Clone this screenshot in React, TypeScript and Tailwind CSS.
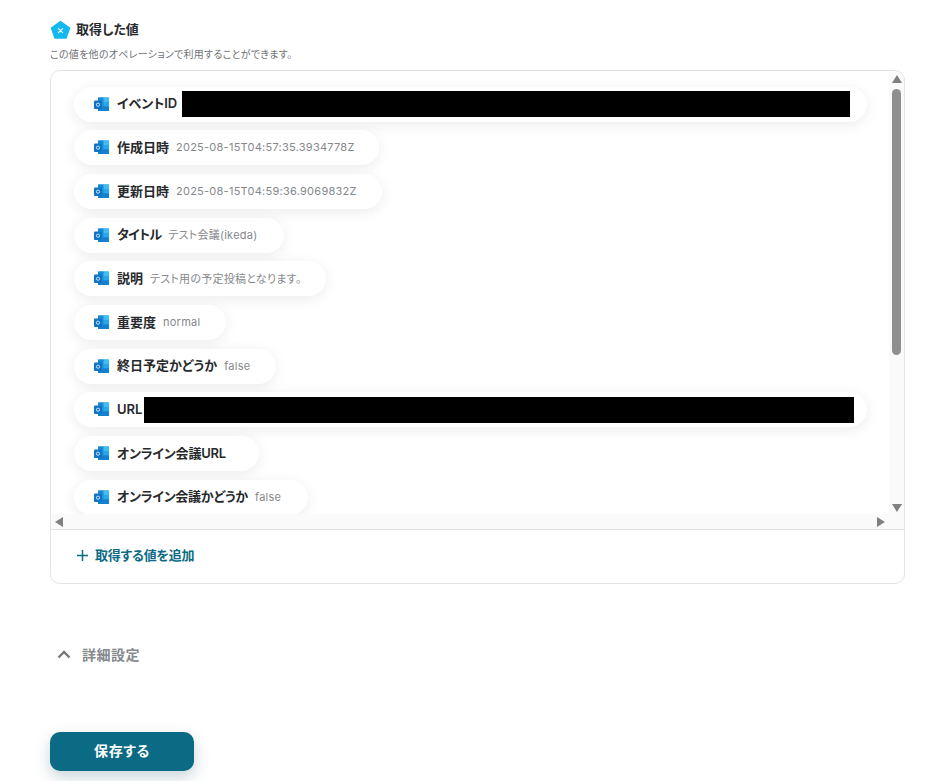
const font = "font-['Inter','Noto_Sans_CJK_JP',sans-serif] [font-feature-settings:'palt']";

type Row = { label: string; value?: string; redact?: number; gap?: string; track?: string; width: number };

const rows: Row[] = [
  { label: 'イベントID', redact: 668, gap: 'ml-[5px]', width: 793 },
  { label: '作成日時', value: '2025-08-15T04:57:35.3934778Z', width: 305 },
  { label: '更新日時', value: '2025-08-15T04:59:36.9069832Z', width: 308 },
  { label: 'タイトル', value: 'テスト会議(ikeda)', track: 'tracking-[-0.7px]', width: 210 },
  { label: '説明', value: 'テスト用の予定投稿となります。', width: 252 },
  { label: '重要度', value: 'normal', width: 152 },
  { label: '終日予定かどうか', value: 'false', width: 202 },
  { label: 'URL', redact: 710, gap: 'ml-[2px]', width: 793 },
  { label: 'オンライン会議URL', track: 'tracking-[-0.2px]', width: 185 },
  { label: 'オンライン会議かどうか', value: 'false', track: 'tracking-[-0.25px]', width: 234 },
];

function OutlookIcon() {
  return (
    <svg width="15" height="15" viewBox="0 0 15 15" className="shrink-0">
      <rect x="4" y="0.5" width="11" height="13.5" rx="1" fill="#1490df" />
      <rect x="4" y="0.5" width="5.5" height="4.5" fill="#1a8ad8" />
      <rect x="9.5" y="0.5" width="5.5" height="4.5" fill="#3fbcf0" />
      <rect x="9.5" y="5" width="5.5" height="4.5" fill="#28a8ea" />
      <rect x="4" y="9.5" width="11" height="4.5" fill="#1480d0" />
      <rect x="0" y="3.5" width="8" height="8.5" rx="1" fill="#1173c4" />
      <circle cx="4" cy="7.7" r="1.6" fill="none" stroke="#d8ecfa" strokeWidth="0.9" />
    </svg>
  );
}

function Pill({ row }: { row: Row }) {
  return (
    <div
      className="h-[35px] shrink-0 flex items-center pl-[20px] bg-white rounded-full shadow-[0_3px_14px_rgba(0,0,0,0.08)]"
      style={{ width: row.width }}
    >
      <OutlookIcon />
      <span className={`${row.track ?? ''} ml-[8px] text-[13px] font-semibold text-[#27292c] whitespace-nowrap`}>{row.label}</span>
      {row.value && (
        <span className="ml-[7px] text-[11px] tracking-[0.25px] text-[#85888c] whitespace-nowrap">{row.value}</span>
      )}
      {row.redact && <div className={`${row.gap} h-[26px] bg-black`} style={{ width: row.redact }} />}
    </div>
  );
}

export default function App() {
  return (
    <div className={`${font} w-[939px] h-[781px] bg-white overflow-hidden pl-[50px] pr-[34px] pt-[20px]`}>
      {/* Heading */}
      <div className="flex items-center h-[20px]">
        <svg width="21" height="20" viewBox="0 0 21 20">
          <path d="M10.5 1.5 19.5 8 16 18H5L1.5 8Z" fill="#12b9ee" stroke="#12b9ee" strokeWidth="1.5" strokeLinejoin="round" />
          <path d="M8.4 8.6 12.6 12.6M12.6 8.6 8.4 12.6" stroke="#fff" strokeWidth="1.2" strokeLinecap="round" />
        </svg>
        <span className="ml-[5px] text-[13px] font-semibold text-[#27292c]">取得した値</span>
      </div>
      <p className="mt-[8px] h-[13px] text-[10px] leading-[13px] tracking-[0.27px] text-[#6f7378]">
        この値を他のオペレーションで利用することができます。
      </p>

      {/* Panel */}
      <div className="mt-[9px] h-[514px] border border-[#e2e3e5] rounded-[10px] overflow-hidden flex flex-col">
        <div className="h-[458px] flex">
          <div className="flex-1 flex flex-col min-w-0">
            <div className="flex-1 overflow-hidden flex flex-col gap-[8.7px] pt-[15.5px] pl-[23px]">
              {rows.map(row => (
                <Pill key={row.label} row={row} />
              ))}
            </div>
            {/* Horizontal scrollbar */}
            <div className="h-[15px] shrink-0 bg-[#fafafa] flex items-center justify-between px-[4px]">
              <span className="w-0 h-0 border-y-[5px] border-y-transparent border-r-[8px] border-r-[#808080]" />
              <span className="w-0 h-0 border-y-[5px] border-y-transparent border-l-[8px] border-l-[#808080]" />
            </div>
          </div>
          {/* Vertical scrollbar */}
          <div className="w-[15px] shrink-0 bg-[#fafafa] flex flex-col items-center pt-[4px] pb-[17px]">
            <span className="w-0 h-0 border-x-[5px] border-x-transparent border-b-[8px] border-b-[#808080]" />
            <div className="mt-[6px] w-[9px] h-[266px] rounded-full bg-[#8f8f8f]" />
            <span className="mt-auto w-0 h-0 border-x-[5px] border-x-transparent border-t-[8px] border-t-[#808080]" />
          </div>
        </div>
        <div className="border-t border-[#e2e3e5] flex-1 flex items-center pl-[25px] pb-[2px]">
          <svg width="13" height="13" viewBox="0 0 13 13">
            <path d="M6.5 1v11M1 6.5h11" stroke="#0b6a84" strokeWidth="1.5" />
          </svg>
          <span className="ml-[6px] text-[13px] tracking-[-0.25px] font-semibold text-[#0b6a84]">取得する値を追加</span>
        </div>
      </div>

      {/* Advanced settings */}
      <div className="mt-[59px] h-[22px] flex items-center pl-[7px]">
        <svg width="14" height="9" viewBox="0 0 14 9">
          <path d="M1.5 7.5 7 2l5.5 5.5" fill="none" stroke="#75787c" strokeWidth="2.4" />
        </svg>
        <span className="ml-[11px] text-[14px] tracking-[0.5px] font-semibold text-[#85888c]">詳細設定</span>
      </div>

      <button className="mt-[67px] w-[144px] h-[39px] pb-[2px] rounded-[10px] bg-[#0b6a84] text-white text-[14px] tracking-[0.6px] font-bold shadow-[0_6px_16px_rgba(11,60,80,0.22)]">
        保存する
      </button>
    </div>
  );
}
